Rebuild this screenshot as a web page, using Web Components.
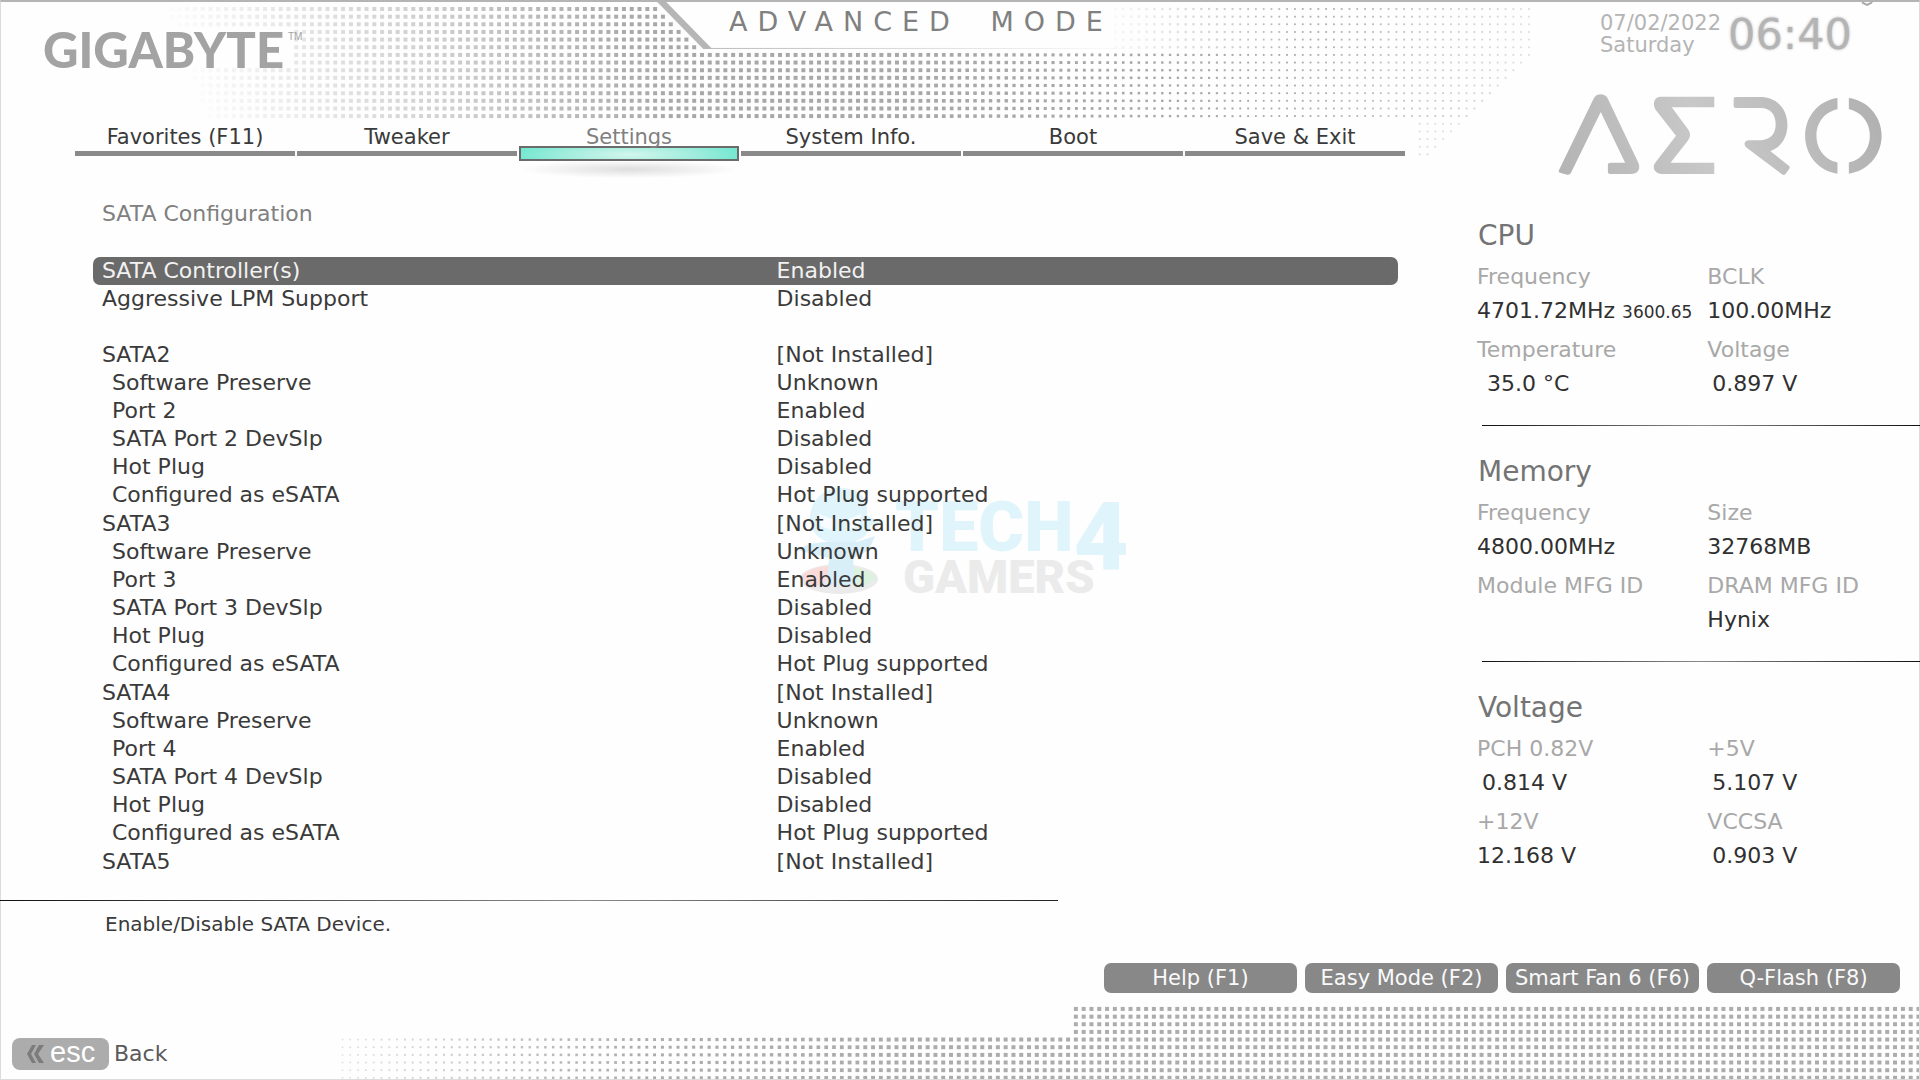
<!DOCTYPE html>
<html lang="en">
<head>
<meta charset="utf-8">
<title>Advanced Mode - SATA Configuration</title>
<style>
  html, body { margin: 0; }
  body { background: #fefefe; color: #3a3a3a; font-family: "DejaVu Sans", sans-serif; font-size: 22px; }
</style>
</head>
<body>
<bios-page>
  <bios-header slot="header" mode="ADVANCED MODE"></bios-header>
  <bios-nav slot="nav"></bios-nav>
  <settings-panel slot="panel" heading="SATA Configuration"></settings-panel>
  <help-line slot="help">Enable/Disable SATA Device.</help-line>
  <bios-clock slot="side" date="07/02/2022" day="Saturday" time="06:40"></bios-clock>
  <aero-logo slot="side"></aero-logo>
  <monitor-section slot="side" heading="CPU">
    <monitor-cell label="Frequency" value="4701.72MHz" note="3600.65"></monitor-cell>
    <monitor-cell label="BCLK" value="100.00MHz"></monitor-cell>
    <monitor-cell label="Temperature" value="35.0 °C" indent="2"></monitor-cell>
    <monitor-cell label="Voltage" value="0.897 V" indent="1"></monitor-cell>
  </monitor-section>
  <monitor-section slot="side" heading="Memory">
    <monitor-cell label="Frequency" value="4800.00MHz"></monitor-cell>
    <monitor-cell label="Size" value="32768MB"></monitor-cell>
    <monitor-cell label="Module MFG ID" value=""></monitor-cell>
    <monitor-cell label="DRAM MFG ID" value="Hynix"></monitor-cell>
  </monitor-section>
  <monitor-section slot="side" heading="Voltage" last>
    <monitor-cell label="PCH 0.82V" value="0.814 V" indent="1"></monitor-cell>
    <monitor-cell label="+5V" value="5.107 V" indent="1"></monitor-cell>
    <monitor-cell label="+12V" value="12.168 V"></monitor-cell>
    <monitor-cell label="VCCSA" value="0.903 V" indent="1"></monitor-cell>
  </monitor-section>
  <function-keys slot="footer"></function-keys>
  <back-key slot="footer">Back</back-key>
</bios-page>

<script>
class Base extends HTMLElement {
  connectedCallback() {
    if (this.shadowRoot) return;
    this.attachShadow({ mode: "open" }).innerHTML = this.render();
  }
  at(name) { return this.getAttribute(name) || ""; }
}

/* Halftone backdrop with the slanted edge of the mode title */
customElements.define("dot-backdrop", class extends Base {
  render() {
    const stepX = 7.81, stepY = 7.66;
    const clamp = v => Math.max(0, Math.min(1, v));
    let dots = "";
    const dot = (x, y, w, o) => {
      if (o < 0.03) return;
      dots += `<rect x="${(x - w / 2).toFixed(1)}" y="${(y - w / 2).toFixed(1)}" width="${w.toFixed(1)}" height="${w.toFixed(1)}" fill-opacity="${o.toFixed(2)}"/>`;
    };
    for (let y = 9; y < 160; y += stepY) {
      for (let x = 155; x < 1536; x += stepX) {
        if (y > 118 && x < 1420) continue;
        if (x > 1535 - Math.max(0, y - 50)) continue;
        const slant = 655 + y;
        if (y < 51 && x > slant - 6 && x < 1110) continue;
        if (x < 292 && y > 28 && y < 70) continue;
        const w = x < 900 ? 4 : x < 1260 ? 4 - (x - 900) / 360 * 2.2 : 1.8;
        let o = clamp((x - 150 - y * .35) / 480);
        if (x > 1300) o = 1 - clamp((x - 1300) / 360);
        if (y < 51 && x >= 1110) o *= clamp((x - 1100) / 220);
        if (y > 118) o *= .6;
        dot(x, y, w, o);
      }
    }
    for (let y = 1010, r = 0; y < 1082; y += stepY, r++) {
      for (let x = 1076 - 94 * stepX; x < 1920; x += stepX) {
        if (r < 4 && x < 1073) continue;
        dot(x, y, x < 900 ? 1.6 + (x - 340) / 560 * 2.4 : 4, x < 640 ? .35 + (x - 340) / 500 : .95);
      }
    }
    return `<style>
      :host { position: absolute; inset: 0; z-index: -1; overflow: hidden; border: 1px solid #dcdcdc; border-top: 2px solid #b4b4b4; box-sizing: border-box; }
      svg { position: absolute; left: 0; top: -2px; width: 100%; height: auto; display: block; }
    </style>
    <svg viewBox="0 0 1920 1080" aria-hidden="true">
      <defs><linearGradient id="f"><stop offset="0" stop-color="#bbb"/><stop offset="1" stop-color="#bbb" stop-opacity="0"/></linearGradient></defs>
      <g fill="#a8a8a8">${dots}</g>
      <path d="M662 0H1130V3H662Z" fill="#fefefe"/>
      <path d="M655 0H664L712 49H703Z" fill="#b6b6b6"/>
      <rect x="708" y="48" width="440" height="1" fill="url(#f)"/>
      <path d="M1863 0L1864 3L1868 5L1872 3L1874 0" fill="none" stroke="#aaa" stroke-width="2"/>
    </svg>`;
  }
});

customElements.define("bios-page", class extends Base {
  render() {
    return `<style>
      :host { display: flex; flex-direction: column; position: relative; z-index: 0; min-height: 100vh; }
      .body { display: grid; grid-template-columns: 3fr 1fr; }
      main, aside { min-width: 0; }
      aside { box-sizing: border-box; padding-left: 37px; }
      footer { padding: 25px 20px 0 12px; }
    </style>
    <dot-backdrop></dot-backdrop>
    <div class="body">
      <main><slot name="header"></slot><slot name="nav"></slot><slot name="panel"></slot><slot name="help"></slot></main>
      <aside><slot name="side"></slot></aside>
    </div>
    <footer><slot name="footer"></slot></footer>`;
  }
});

customElements.define("bios-header", class extends Base {
  render() {
    return `<style>
      :host { display: flex; height: 122px; }
      .brand { flex: 0 0 50%; box-sizing: border-box; padding: 21px 0 0 43px; font: 900 49px/56px Lato, sans-serif; color: #a3a3a3; display: flex; align-items: flex-start; }
      sup { font: 10px/12px "Liberation Sans", sans-serif; margin: 10px 0 0 4px; }
      h1 { margin: 0; padding: 8px 0 0 9px; font-weight: 400; font-size: 27px; line-height: 28px; letter-spacing: 10px; color: #808080; white-space: nowrap; word-spacing: 12px; }
    </style>
    <div class="brand">GIGABYTE<sup>TM</sup></div><h1>${this.at("mode")}</h1>`;
  }
});

customElements.define("bios-nav", class extends Base {
  render() {
    const items = ["Favorites (F11)", "Tweaker", "Settings", "System Info.", "Boot", "Save &amp; Exit"];
    return `<style>
      :host { display: block; }
      nav { display: grid; grid-template-columns: repeat(6, 1fr); gap: 2px; padding: 0 35px 0 75px; height: 39px; }
      a { color: #3a3a3a; text-decoration: none; font-size: 21px; line-height: 30px; text-align: center; }
      a::after { content: ""; display: block; height: 5px; margin-top: -1px; background: #8a8a8a; }
      a.on { color: #808080; position: relative; }
      a.on::after { height: 11px; margin-top: -6px; border: 2px solid #6b6b6b;
        background: radial-gradient(ellipse 60% 160% at 50% 60%, #d4f6ee, #9cecdb 55%, #62e6cc); }
      a.on::before { content: ""; position: absolute; left: 0; right: 0; top: 40px; height: 18px;
        background: radial-gradient(ellipse 50% 50% at 50% 40%, #dedede, #fefefe00); }
    </style>
    <nav>${items.map((t, i) => `<a href="#"${i === 2 ? ' class="on" aria-current="page"' : ""}>${t}</a>`).join("")}</nav>`;
  }
});

customElements.define("settings-panel", class extends Base {
  render() {
    const rows = [["SATA Controller(s)", "Enabled", "sel"], ["Aggressive LPM Support", "Disabled", ""], ["", "", ""]];
    for (const n of [2, 3, 4]) {
      rows.push(["SATA" + n, "[Not Installed]", n > 2 ? "grp" : ""], ["Software Preserve", "Unknown", "sub"], ["Port " + n, "Enabled", "sub"],
        ["SATA Port " + n + " DevSlp", "Disabled", "sub"], ["Hot Plug", "Disabled", "sub"], ["Configured as eSATA", "Hot Plug supported", "sub"]);
    }
    rows.push(["SATA5", "[Not Installed]", "grp"]);
    return `<style>
      :host { display: block; padding: 39px 42px 24px 93px; }
      h2 { margin: 0 0 29px 9px; font-weight: 400; font-size: 22px; line-height: 28px; color: #808080; }
      table { width: 100%; border-collapse: collapse; table-layout: fixed; font-size: 22px; line-height: 28px; }
      th, td { box-sizing: border-box; height: 28px; padding: 0; font-weight: 400; text-align: left; white-space: nowrap; }
      th { width: 52%; padding-left: 9px; border-radius: 7px 0 0 7px; }
      td { border-radius: 0 7px 7px 0; padding-left: 5px; }
      .grp th, .grp td { padding-top: 1px; }
      .sub th { padding-left: 19px; }
      .sel th, .sel td { background: #6a6a6a; color: #f2f2f2; }
    </style>
    <h2>${this.at("heading")}</h2>
    <table>${rows.map(r => `<tr class="${r[2]}"><th scope="row">${r[0]}</th><td>${r[1]}</td></tr>`).join("")}</table>`;
  }
});

customElements.define("help-line", class extends Base {
  render() {
    return `<style>
      :host { display: block; }
      .rule { width: 73.5%; height: 1px; background: linear-gradient(90deg, #111, #8a8a8a 55%, #222); }
      p { margin: 0; padding: 9px 0 0 105px; font-size: 20px; line-height: 28px; }
    </style>
    <div class="rule"></div><p><slot></slot></p>`;
  }
});

customElements.define("bios-clock", class extends Base {
  render() {
    return `<style>
      :host { display: flex; gap: 7px; padding: 12px 0 0 123px; color: #b4b4b4; white-space: nowrap; }
      div { font-size: 21px; line-height: 22px; }
      time { font-size: 43px; line-height: 45px; text-shadow: 0 0 3px #bbb; }
    </style>
    <div>${this.at("date")}<br>${this.at("day")}</div><time>${this.at("time")}</time>`;
  }
});

customElements.define("aero-logo", class extends Base {
  render() {
    return `<style>:host { display: block; padding: 36px 0 0 80px; } svg { display: block; width: 328px; height: 83px; }</style>
    <svg viewBox="705 278 780 250" preserveAspectRatio="none" role="img" aria-label="AERO">
      <defs><linearGradient id="g" gradientUnits="userSpaceOnUse" x1="710" y1="520" x2="1480" y2="290">
        <stop offset="0" stop-color="#b4b4b4"/><stop offset=".45" stop-color="#c8c8c8"/><stop offset="1" stop-color="#b0b0b0"/></linearGradient></defs>
      <g fill="url(#g)">
        <path d="M709 512L792 295Q797 282 810 282Q821 283 826 295L897 484Q904 500 898 512Q893 522 880 522H832Q826 522 826 516V495Q826 488 833 488H867L809 335L738 519Q735 526 729 524L714 519Q708 517 709 512Z"/>
        <path d="M950 289H1079V321H978L1017 388Q1026 404 1017 420L975 488H1079V522H952Q934 519 935 498Q936 492 940 486L988 407L940 329Q934 319 936 304Q939 291 950 289Z"/>
        <path d="M1130 290H1195C1234 295 1253 334 1253 374C1253 412 1238 442 1212 453L1257 498Q1260 502 1257 507L1248 523Q1244 527 1240 523L1156 443Q1150 437 1151 430Q1152 421 1161 420H1186C1212 420 1225 402 1225 372C1225 342 1212 323 1190 323H1130Q1125 323 1125 317V296Q1125 290 1130 290Z"/>
        <path d="M1372 293V327C1343 334 1322 366 1322 406C1322 448 1343 480 1372 487V521C1328 514 1295 466 1295 407C1295 348 1328 300 1372 293Z"/>
        <path d="M1399 293V327C1428 334 1449 366 1449 406C1449 448 1428 480 1399 487V521C1443 514 1477 466 1477 407C1477 348 1443 300 1399 293Z"/>
      </g>
    </svg>`;
  }
});

customElements.define("monitor-section", class extends Base {
  render() {
    const last = this.hasAttribute("last");
    return `<style>
      :host { display: block; padding-top: ${this.at("heading") === "CPU" ? 44 : 30}px; }
      h2 { margin: 0 0 11px 1px; font-weight: 400; font-size: 28px; line-height: 32px; color: #747474; }
      .cells { display: grid; grid-template-columns: 52% 1fr; row-gap: 11px; }
      .rule { margin: 27px 0 0 5px; height: 1px; background: linear-gradient(90deg, #111, #8a8a8a 50%, #111); }
    </style>
    <h2>${this.at("heading")}</h2><div class="cells"><slot></slot></div>${last ? "" : '<div class="rule"></div>'}`;
  }
});

customElements.define("monitor-cell", class extends Base {
  render() {
    const note = this.at("note");
    return `<style>
      :host { display: block; min-width: 0; white-space: nowrap; line-height: 28px; }
      .l { color: #a8a8a8; margin-bottom: 6px; }
      .v { display: flex; align-items: baseline; gap: 7px; height: 28px; padding-left: ${Number(this.at("indent")) * 5}px; color: #303030; }
      small { font-size: 17px; }
    </style>
    <div class="l">${this.at("label")}</div><div class="v"><span>${this.at("value")}</span>${note ? `<small>${note}</small>` : ""}</div>`;
  }
});

customElements.define("function-keys", class extends Base {
  render() {
    return `<style>
      :host { display: flex; justify-content: flex-end; gap: 8px; }
      button { width: 193px; height: 30px; padding: 0; border: 0; border-radius: 7px; background: #888; color: #fafafa; font: 21px/30px "DejaVu Sans", sans-serif; white-space: nowrap; }
    </style>${["Help (F1)", "Easy Mode (F2)", "Smart Fan 6 (F6)", "Q-Flash (F8)"].map(t => `<button type="button">${t}</button>`).join("")}`;
  }
});

customElements.define("back-key", class extends Base {
  render() {
    return `<style>
      :host { display: block; padding: 45px 0 9px; }
      button { display: flex; align-items: center; gap: 5px; padding: 0; border: 0; background: none; color: #5a5a5a; font: 22px/32px "DejaVu Sans", sans-serif; }
      .key { display: flex; align-items: center; gap: 6px; width: 97px; height: 32px; box-sizing: border-box; padding-left: 15px; border-radius: 8px; background: #acacac; color: #fff; font: 29px/28px "Liberation Sans", sans-serif; }
      .key span { padding-bottom: 5px; }
    </style>
    <button type="button"><span class="key"><svg width="17" height="18" viewBox="0 0 17 18" aria-hidden="true"><path d="M5 0H9L4 9L9 18H5L0 9ZM12 0H17L11 9L17 18H12L7 9Z" fill="#7c7c7c"/></svg><span>esc</span></span><slot></slot></button>`;
  }
});

/* Translucent site mark laid under the settings list */
customElements.define("site-mark", class extends Base {
  render() {
    return `<style>
      :host { position: absolute; left: 795px; top: 486px; display: flex; gap: 10px; opacity: .55; pointer-events: none; font-family: Roboto, sans-serif; font-weight: 900; z-index: -1; }
      .w { display: grid; grid-template-columns: auto auto; align-content: start; padding-top: 16px; }
      .t { font-size: 70px; line-height: 50px; color: #c8eef9; }
      .f { font-size: 95px; line-height: 70px; height: 50px; color: #c8eef9; }
      .g { grid-column: 1 / 3; font-size: 47px; line-height: 33px; padding: 8px 0 0 8px; color: #dcdcdc; }
    </style>
    <svg width="90" height="110" viewBox="0 0 90 110" aria-hidden="true">
      <ellipse cx="44" cy="93" rx="39" ry="15" fill="#dcdcdc"/>
      <path d="M6 92a39 13 0 0 1 26-12l8 10-22 12Z" fill="#f6c0bc"/><path d="M56 81a39 13 0 0 1 25 12l-14 8-14-9Z" fill="#bfe9c6"/>
      <path d="M46 2C66 2 73 14 72 30L86 36L76 40C72 52 60 58 46 58C28 58 16 48 15 34C14 18 26 2 46 2Z" fill="#c8eef9"/>
      <path d="M24 28L40 34L36 44L26 40ZM66 28L52 34L54 44L64 40Z" fill="#f4fbfe"/>
      <path d="M30 56L62 56L80 50L74 64L58 72L60 96Q46 104 32 96L34 72L2 64L14 58Z" fill="#bce4f4"/>
    </svg>
    <div class="w"><span class="t">TECH</span><span class="f">4</span><span class="g">GAMERS</span></div>`;
  }
});
document.querySelector("bios-page").shadowRoot.querySelector("main").append(document.createElement("site-mark"));
</script>
</body>
</html>
